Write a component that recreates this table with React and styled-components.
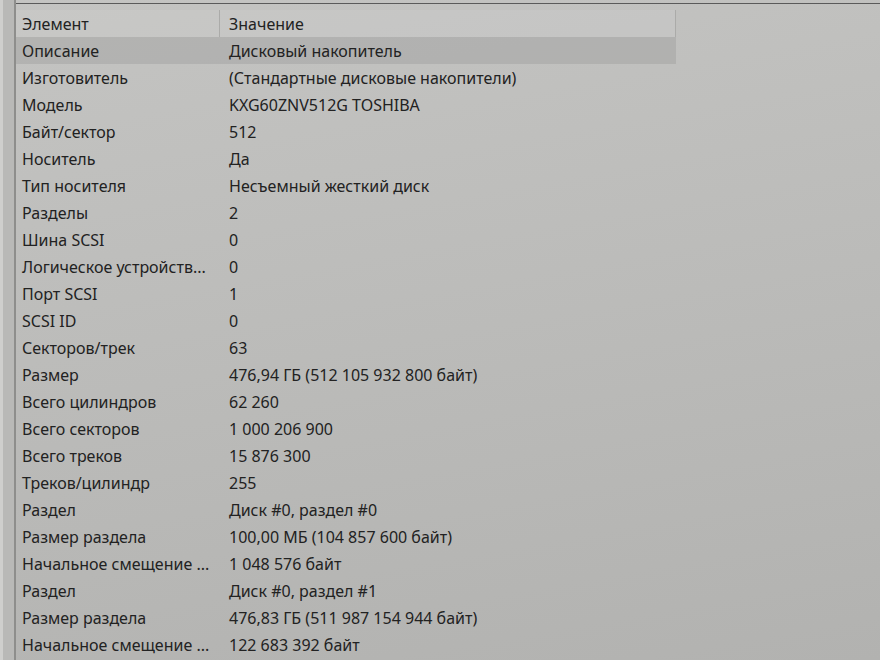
import React from "react";
import styled, { createGlobalStyle } from "styled-components";

const Global = createGlobalStyle`
  html, body { margin: 0; padding: 0; }
  body {
    width: 880px; height: 660px; overflow: hidden;
    background: #bdbdbb;
    font-family: "Noto Sans", "Open Sans", "DejaVu Sans", sans-serif;
  }
`;

const Screen = styled.div`
  width: 880px;
  height: 660px;
  display: flex;
  background: linear-gradient(170deg, #c4c4c2 0%, #bcbcba 45%, #b2b2b0 100%);
  overflow: hidden;
`;

const LeftStrip = styled.div`
  width: 16px;
  flex: none;
  border-left: 3px solid #cfcfcd;
  border-right: 2px solid #8e8e8c;
  box-sizing: border-box;
  background: #b9b9b7;
`;

const ListPane = styled.div`
  flex: 1;
  display: flex;
  flex-direction: column;
  padding-top: 6px;
  border-top: 1px solid #5a5a5a;
  margin-top: 3px;
`;

const Row = styled.div`
  display: grid;
  grid-template-columns: 204px 456px 1fr;
  height: 27px;
  align-items: center;
  font-size: 16px;
  color: #222;
`;

const Cell = styled.div`
  padding-left: ${(p) => (p.$value ? "9px" : "6px")};
  white-space: nowrap;
  overflow: hidden;
  height: 100%;
  display: flex;
  align-items: center;
  border-right: ${(p) => (p.$divider ? "1px solid #ababa9" : "none")};
  background: ${(p) => (p.$fill ? p.$fill : "transparent")};
`;

const Filler = styled.div`
  height: 100%;
`;

const rows = [
  ["Описание", "Дисковый накопитель"],
  ["Изготовитель", "(Стандартные дисковые накопители)"],
  ["Модель", "KXG60ZNV512G TOSHIBA"],
  ["Байт/сектор", "512"],
  ["Носитель", "Да"],
  ["Тип носителя", "Несъемный жесткий диск"],
  ["Разделы", "2"],
  ["Шина SCSI", "0"],
  ["Логическое устройств...", "0"],
  ["Порт SCSI", "1"],
  ["SCSI ID", "0"],
  ["Секторов/трек", "63"],
  ["Размер", "476,94 ГБ (512 105 932 800 байт)"],
  ["Всего цилиндров", "62 260"],
  ["Всего секторов", "1 000 206 900"],
  ["Всего треков", "15 876 300"],
  ["Треков/цилиндр", "255"],
  ["Раздел", "Диск #0, раздел #0"],
  ["Размер раздела", "100,00 МБ (104 857 600 байт)"],
  ["Начальное смещение ...", "1 048 576 байт"],
  ["Раздел", "Диск #0, раздел #1"],
  ["Размер раздела", "476,83 ГБ (511 987 154 944 байт)"],
  ["Начальное смещение ...", "122 683 392 байт"],
];

export default function App() {
  return (
    <>
      <Global />
      <Screen>
        <LeftStrip />
        <ListPane>
          <Row>
            <Cell $divider $fill="rgba(255,255,255,0.08)">Элемент</Cell>
            <Cell $value $divider $fill="rgba(255,255,255,0.08)">Значение</Cell>
            <Filler />
          </Row>
          {rows.map(([k, v], i) => (
            <Row key={i}>
              <Cell $fill={i === 0 ? "rgba(0,0,0,0.08)" : undefined}>{k}</Cell>
              <Cell $value $fill={i === 0 ? "rgba(0,0,0,0.08)" : undefined}>{v}</Cell>
              <Filler />
            </Row>
          ))}
        </ListPane>
      </Screen>
    </>
  );
}
